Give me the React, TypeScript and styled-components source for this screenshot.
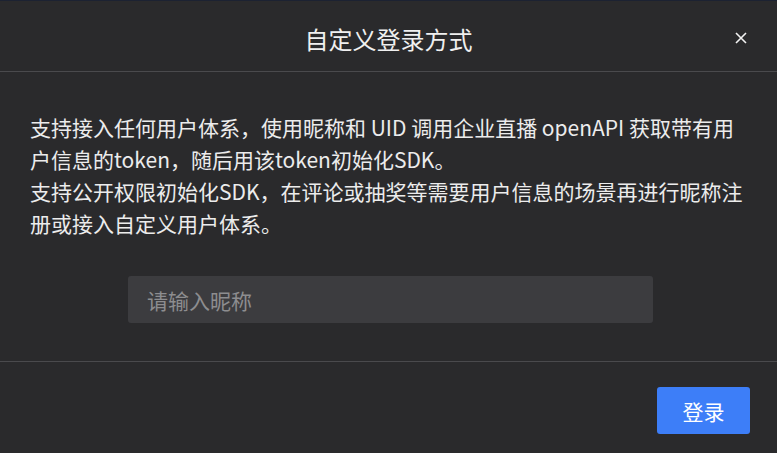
import styled, { createGlobalStyle } from "styled-components";

const GlobalStyle = createGlobalStyle`
    html, body {
        margin: 0;
        padding: 0;
        background: #2a2a2c;
    }
    * {
        box-sizing: border-box;
    }
`;

const Modal = styled.div`
    width: 777px;
    height: 453px;
    background: #2a2a2c;
    border-top: 1px solid #1c2232;
    display: flex;
    flex-direction: column;
    font-family: "Microsoft YaHei", "Noto Sans CJK SC", "Noto Sans", sans-serif;
    color: #e8e8e8;
`;

const Header = styled.div`
    position: relative;
    height: 71px;
    flex-shrink: 0;
    display: flex;
    align-items: center;
    justify-content: center;
    border-bottom: 1px solid #4a4a4d;

    .title {
        font-size: 24px;
        line-height: 30px;
        color: #f0f0f0;
        margin-top: 5px;
    }
`;

const CloseButton = styled.button`
    position: absolute;
    right: 28px;
    top: 29px;
    width: 16px;
    height: 16px;
    padding: 0;
    border: 0;
    background: transparent;
    cursor: pointer;
    display: flex;
    align-items: center;
    justify-content: center;
`;

const Body = styled.div`
    flex: 1;
    padding: 39px 32px 36px 30px;
    border-bottom: 1px solid #4a4a4d;
    display: flex;
    flex-direction: column;
    align-items: flex-start;

    .description {
        align-self: stretch;
        margin: 0;
        font-size: 21px;
        line-height: 32px;
        color: #ececec;
    }
`;

const NicknameInput = styled.input`
    margin: 37px 0 0 98px;
    width: 525px;
    height: 47px;
    padding: 0 19px;
    border: 0;
    border-radius: 3px;
    background: #3c3c3f;
    outline: none;
    font-family: inherit;
    font-size: 21px;
    color: #e8e8e8;

    &::placeholder {
        color: #8d8d8f;
    }
`;

const Footer = styled.div`
    height: 91px;
    flex-shrink: 0;
    display: flex;
    justify-content: flex-end;
    padding: 25px 27px 0 0;
`;

const LoginButton = styled.button`
    width: 93px;
    height: 47px;
    border: 0;
    border-radius: 3px;
    background: #3d7ef8;
    color: #ffffff;
    font-family: inherit;
    font-size: 21px;
    cursor: pointer;
`;

export default function App() {
    return (
        <>
            <GlobalStyle />
            <Modal>
                <Header>
                    <div className="title">自定义登录方式</div>
                    <CloseButton type="button" aria-label="close">
                        <svg width="12" height="12" viewBox="0 0 12 12">
                            <path
                                d="M1 1 L11 11 M11 1 L1 11"
                                stroke="#f2f2f2"
                                strokeWidth="1.6"
                            />
                        </svg>
                    </CloseButton>
                </Header>
                <Body>
                    <p className="description">
                        支持接入任何用户体系，使用昵称和 UID 调用企业直播 openAPI
                        获取带有用户信息的token，随后用该token初始化SDK。
                        <br />
                        支持公开权限初始化SDK，在评论或抽奖等需要用户信息的场景再进行昵称注册或接入自定义用户体系。
                    </p>
                    <NicknameInput type="text" placeholder="请输入昵称" />
                </Body>
                <Footer>
                    <LoginButton type="button">登录</LoginButton>
                </Footer>
            </Modal>
        </>
    );
}
